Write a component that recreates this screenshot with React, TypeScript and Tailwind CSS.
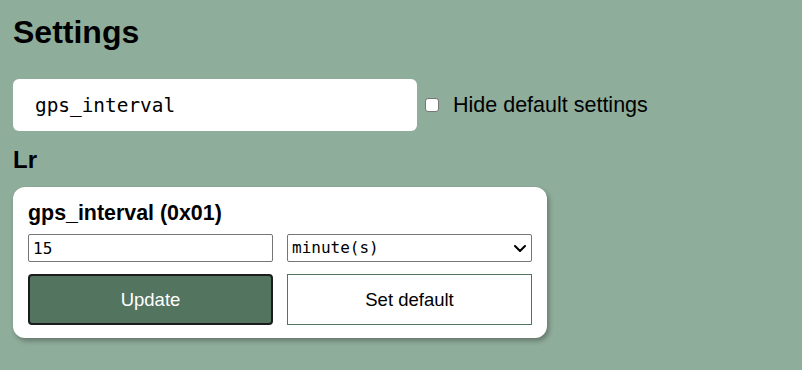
import React from 'react';

const App: React.FC = () => {
  return (
    <div className="min-h-screen bg-[#8fad9b] px-[13px] pt-[14px] pb-4 font-['Liberation_Sans',Arial,sans-serif] text-black">
      <h1 className="text-[32px] font-bold leading-[36px]">Settings</h1>

      <div className="mt-[29px] flex items-center">
        <input
          type="text"
          defaultValue="gps_interval"
          className="h-[52px] w-[404px] rounded-[6px] bg-white pl-[22px] font-['DejaVu_Sans_Mono',monospace] text-[19.4px] text-black outline-none"
        />
        <label className="ml-[8px] flex items-center">
          <input
            type="checkbox"
            className="h-[14px] w-[14px] appearance-none rounded-[3px] border border-[#767676] bg-white"
          />
          <span className="ml-[14px] text-[21.5px] leading-[24px]">Hide default settings</span>
        </label>
      </div>

      <h2 className="mt-[15px] text-[24px] font-bold leading-[28px]">Lr</h2>

      <div className="mt-[13px] w-[534px] rounded-[12px] bg-white px-[15px] pt-[14px] pb-[13px] shadow-[2px_3px_5px_rgba(0,0,0,0.3)]">
        <h3 className="text-[21.4px] font-bold leading-[24px]">gps_interval (0x01)</h3>

        <div className="mt-[9px] grid grid-cols-2 gap-x-[14px] gap-y-[12px]">
          <input
            type="text"
            defaultValue="15"
            className="h-[28px] rounded-[2px] border border-[#767676] bg-white px-[4px] font-['DejaVu_Sans_Mono',monospace] text-[16px] outline-none"
          />
          <div className="relative">
            <select
              defaultValue="minute"
              className="h-[28px] w-full appearance-none rounded-[2px] border border-[#767676] bg-white px-[4px] font-['DejaVu_Sans_Mono',monospace] text-[16px] outline-none"
            >
              <option value="second">second(s)</option>
              <option value="minute">minute(s)</option>
              <option value="hour">hour(s)</option>
            </select>
            <svg
              className="pointer-events-none absolute right-[6px] top-[11px]"
              width="12"
              height="7"
              viewBox="0 0 12 7"
              fill="none"
            >
              <path d="M1 1l5 5 5-5" stroke="#000" strokeWidth="2" strokeLinecap="round" strokeLinejoin="round" />
            </svg>
          </div>

          <button className="flex h-[51px] items-center justify-center rounded-[4px] border-2 border-[#1c1c1c] bg-[#53745f] text-[18.5px] text-white">
            Update
          </button>
          <button className="flex h-[51px] items-center justify-center border border-[#53745f] bg-white text-[18.5px] text-black">
            Set default
          </button>
        </div>
      </div>
    </div>
  );
};

export default App;
